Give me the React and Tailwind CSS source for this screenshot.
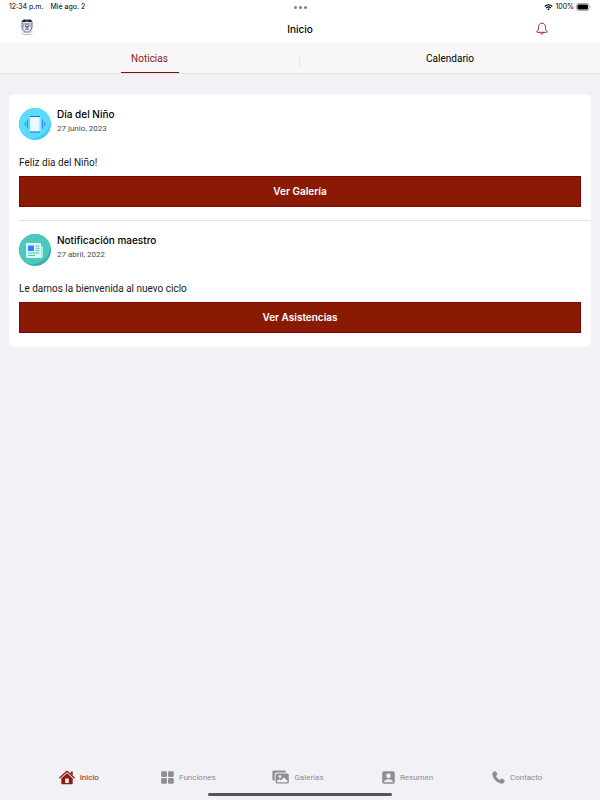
import React, { useState } from "react";

const news = [
  {
    id: 1,
    title: "Día del Niño",
    date: "27 junio, 2023",
    message: "Feliz dia del Niño!",
    action: "Ver Galería",
    Icon: GalleryBadge,
  },
  {
    id: 2,
    title: "Notificación maestro",
    date: "27 abril, 2022",
    message: "Le damos la bienvenida al nuevo ciclo",
    action: "Ver Asistencias",
    Icon: NewsBadge,
  },
];

const navItems = [
  { label: "Inicio", Icon: HomeIcon },
  { label: "Funciones", Icon: GridIcon },
  { label: "Galerías", Icon: PhotosIcon },
  { label: "Resumen", Icon: PersonIcon },
  { label: "Contacto", Icon: PhoneIcon },
];

function SchoolLogo() {
  return (
    <svg viewBox="0 0 14 18" className="w-[14px] h-[18px]" role="img" aria-label="Escudo del colegio">
      <path d="M2 3.5 L7 1.8 L12 3.5 V9 C12 12 9.5 13.6 7 14.5 C4.500 13.600 2 12 2 9 Z" fill="#e4e7ee" stroke="#5a6580" strokeWidth="1" />
      <path d="M1.500 3.200 L4 1.300 L7 2.300 L10 1.300 L12.500 3.200 L10 4.300 L7 3.600 L4 4.300 Z" fill="#1d263b" />
      <path d="M4.500 6 H9.500 M5 7.500 L7 9.500 L9.300 7.500 M5.200 11 H8.800" fill="none" stroke="#4a5673" strokeWidth="1.100" />
      <path d="M3.500 5.500 V9.500 M10.800 5.500 V9.500" stroke="#8791a5" strokeWidth="0.700" />
      <path d="M1 12.300 C3 15.500 11 15.500 13 12.300 M1.500 15.500 C4 17 10 17 12.500 15.500" fill="none" stroke="#b4bac7" strokeWidth="0.900" />
    </svg>
  );
}

function WifiIcon() {
  return (
    <svg viewBox="0 0 9 7" className="w-[9px] h-[7px]" fill="none" stroke="#000" strokeWidth="1.200" aria-hidden="true">
      <path d="M0.700 2.400 C2.900 0.300 6.100 0.300 8.300 2.400" />
      <path d="M2.100 4 C3.500 2.700 5.500 2.700 6.900 4" />
      <path d="M3.300 5 C4 4.400 5 4.400 5.700 5 L4.500 6.400 Z" fill="#000" stroke="none" />
    </svg>
  );
}

function BatteryIcon() {
  return (
    <svg viewBox="0 0 15 8" className="w-[15px] h-[8px]" aria-hidden="true">
      <rect x="0.500" y="0.500" width="12.500" height="7" rx="2" fill="#fff" stroke="#aaa" />
      <rect x="1.500" y="1.500" width="10.500" height="5" rx="1" fill="#000" />
      <path d="M13.800 2.800 C14.700 3 14.700 5 13.800 5.200 Z" fill="#aaa" />
    </svg>
  );
}

function BellIcon() {
  return (
    <svg viewBox="0 0 12 13" className="w-3 h-[13px]" fill="none" stroke="#8b1a14" strokeWidth="0.900" strokeLinejoin="round" aria-hidden="true">
      <path d="M6 1.200 C3.700 1.200 2.600 2.900 2.600 4.900 C2.600 7.900 1.700 8.700 0.900 9.500 C0.600 9.900 0.700 10.300 1.200 10.300 H10.800 C11.300 10.300 11.400 9.900 11.100 9.500 C10.300 8.700 9.400 7.900 9.400 4.900 C9.400 2.900 8.300 1.200 6 1.200 Z" />
      <path d="M4.500 10.400 C4.600 12.600 7.400 12.600 7.500 10.400" />
    </svg>
  );
}

function GalleryBadge() {
  return (
    <svg viewBox="0 0 32 32" className="size-8 shrink-0" aria-hidden="true">
      <circle cx="16" cy="16" r="16" fill="#45c9fa" />
      <path d="M16 0 C24 0 31 6 31 13.500 C31 22 23 29.500 13.500 30.500 C6 30 0 24 0 16 C0 7 7 0 16 0 Z" fill="#5adcfb" />
      <rect x="11" y="9" width="10" height="14.500" fill="#e6fbff" />
      <rect x="20" y="9" width="1.500" height="14.500" fill="#b2eefb" />
      <path d="M11 8.500 H21 M11 24 H21" stroke="#2668ee" strokeWidth="1.200" />
      <path d="M8.500 11.500 V20.500 M23.500 11.500 V20.500" stroke="#3c86f5" strokeWidth="1.100" />
      <path d="M6.300 14 V18 M25.700 14 V18" stroke="#3c86f5" strokeWidth="1.100" />
    </svg>
  );
}

function NewsBadge() {
  return (
    <svg viewBox="0 0 32 32" className="size-8 shrink-0" aria-hidden="true">
      <circle cx="16" cy="16" r="16" fill="#3aaea4" />
      <path d="M16 0 C24 0 31 6 31 13.500 C31 22 23 29.500 13.500 30.500 C6 30 0 24 0 16 C0 7 7 0 16 0 Z" fill="#4bc9bd" />
      <path d="M20 12 H24 V22 C24 23.500 23 24 22 24 H19 Z" fill="#a5eee7" />
      <path d="M7 9 H22 V22 C22 23 22 23.500 23 24 H9 C8 24 7 23 7 22 Z" fill="#d9fbf7" />
      <rect x="9" y="11.500" width="6" height="5.500" fill="#377dff" />
      <path d="M16.500 12 H20.500 M16.500 14.300 H20.500 M16.500 16.600 H20.500 M9 19 H20.500 M9 21.500 H16" stroke="#45bbb0" strokeWidth="0.900" />
    </svg>
  );
}

function HomeIcon() {
  return (
    <svg viewBox="0 0 16 15" className="w-4 h-[15px]" fill="currentColor" aria-hidden="true">
      <path d="M0.900 7.800 L8 1.300 L15.100 7.800" fill="none" stroke="currentColor" strokeWidth="1.300" strokeLinecap="round" strokeLinejoin="round" />
      <path d="M11.700 1.500 H13.700 V5.500 L11.700 3.700 Z" />
      <path fillRule="evenodd" d="M8 3.300 L13.700 8.500 V13 C13.700 13.800 13.300 14.300 12.500 14.300 H3.500 C2.700 14.300 2.300 13.800 2.300 13 V8.500 Z M6.200 8.600 V13 H9.800 V8.600 Z" />
    </svg>
  );
}

function GridIcon() {
  return (
    <svg viewBox="0 0 13 13" className="size-[13px]" fill="currentColor" aria-hidden="true">
      <rect x="0.200" y="0.200" width="5.800" height="5.800" rx="1.200" />
      <rect x="7" y="0.200" width="5.800" height="5.800" rx="1.200" />
      <rect x="0.200" y="7" width="5.800" height="5.800" rx="1.200" />
      <rect x="7" y="7" width="5.800" height="5.800" rx="1.200" />
    </svg>
  );
}

function PhotosIcon() {
  return (
    <svg viewBox="0 0 17 14" className="w-[17px] h-[14px]" fill="currentColor" aria-hidden="true">
      <path d="M2 0.500 H12.300 C13.300 0.500 13.800 1 13.800 2 V2.500 H4.500 C3.400 2.500 2.700 3.200 2.700 4.300 V10.500 H2 C1 10.500 0.400 10 0.400 9 V2 C0.400 1 1 0.500 2 0.500 Z" />
      <rect x="3.600" y="3.400" width="13.200" height="10.200" rx="1.500" />
      <circle cx="8" cy="6.600" r="1.400" fill="#f2f1f6" />
      <path d="M5 12.300 V10.900 L7.200 9.100 L8.800 10.500 L12 7.500 L15.500 10.700 V12.300 Z" fill="#f2f1f6" />
    </svg>
  );
}

function PersonIcon() {
  return (
    <svg viewBox="0 0 13 13" className="size-[13px]" aria-hidden="true">
      <rect x="0.200" y="0.200" width="12.600" height="12.600" rx="1.800" fill="currentColor" />
      <ellipse cx="6.500" cy="4.700" rx="2.200" ry="2.500" fill="#f2f1f6" />
      <path d="M2.200 11.200 C2.200 9.200 4.300 8.300 6.500 8.300 C8.700 8.300 10.800 9.200 10.800 11.200 Z" fill="#f2f1f6" />
    </svg>
  );
}

function PhoneIcon() {
  return (
    <svg viewBox="0 0 13 13" className="size-[13px]" fill="currentColor" aria-hidden="true">
      <path d="M2.700 0.300 C3.200 0 3.600 0.200 4 0.700 L5.200 2.500 C5.600 3.100 5.500 3.600 5 4.100 L4.300 4.800 C4.100 5 4.100 5.200 4.200 5.500 C4.900 6.800 6.200 8.100 7.500 8.800 C7.800 8.900 8 8.900 8.200 8.700 L8.900 8 C9.400 7.500 9.900 7.400 10.500 7.800 L12.300 9 C12.800 9.400 13 9.800 12.700 10.300 C12 11.900 10.900 12.900 9.500 12.700 C5.200 12.100 0.900 7.800 0.300 3.500 C0.100 2.100 1.100 1 2.700 0.300 Z" />
    </svg>
  );
}

export default function App() {
  const [tab, setTab] = useState("Noticias");
  const [page, setPage] = useState("Inicio");

  return (
    <div className="min-h-screen flex flex-col bg-[#f2f1f6] text-black font-['Roboto','Liberation_Sans',sans-serif]">
      {/* Status bar */}
      <div className="grid grid-cols-3 items-center h-[14px] bg-white px-[9px] text-[7px] leading-[14px] font-['Inter','Liberation_Sans',sans-serif]">
        <div className="flex gap-[7px]">
          <span>12:34 p.m.</span>
          <span>Mié ago. 2</span>
        </div>
        <div className="flex justify-center gap-[2px]">
          <span className="size-[3px] rounded-full bg-[#808080]" />
          <span className="size-[3px] rounded-full bg-[#808080]" />
          <span className="size-[3px] rounded-full bg-[#808080]" />
        </div>
        <div className="flex items-center justify-end gap-[2px]">
          <WifiIcon />
          <span>100%</span>
          <BatteryIcon />
        </div>
      </div>

      {/* Header */}
      <header className="grid grid-cols-3 items-center h-[29px] bg-white pl-5 pr-[52px]">
        <div className="pb-1"><SchoolLogo /></div>
        <h1 className="pl-8 text-center text-[10px] leading-[14px] font-medium font-['Inter','Liberation_Sans',sans-serif]">Inicio</h1>
        <button type="button" aria-label="Notificaciones" className="justify-self-end">
          <BellIcon />
        </button>
      </header>

      {/* Tabs */}
      <div className="flex items-stretch h-[31px] bg-[#f7f7f7] border-b border-[#e1e0e4]">
        {["Noticias", "Calendario"].map((name) => (
          <button key={name} type="button" onClick={() => setTab(name)} className="group flex-1 flex items-center">
            <span className="flex-1 flex justify-center">
              <span className={`flex items-center justify-center min-w-[58px] h-[30px] pt-[2px] border-b text-[10px] leading-[14px] ${tab === name ? "border-[#8b0f0c] text-[#8b2019]" : "border-transparent"}`}>
                {name}
              </span>
            </span>
            <span className="w-px h-3 mt-2 bg-[#e9e9ea] group-last:hidden" />
          </button>
        ))}
      </div>

      {/* News */}
      <main className="flex-1 px-[9px] pt-5">
        <div className="bg-white rounded-md px-[10px]">
          {news.map(({ id, title, date, message, action, Icon }) => (
            <article key={id} className="pt-[14px] pb-[13px] border-b border-[#e3e3e5] -mr-[10px] pr-[10px] last:border-b-0 last:pt-[13px] last:pb-[14px]">
              <div className="flex gap-[6px]">
                <Icon />
                <div>
                  <h2 className="text-[10px] leading-3 font-medium font-['Inter','Liberation_Sans',sans-serif]">{title}</h2>
                  <p className="pt-[3px] text-[8px] leading-3 text-[#4a4a4a]">{date}</p>
                </div>
              </div>
              <p className="mt-4 mb-[6px] text-[10px] leading-[14px] text-[#1a1a1a]">{message}</p>
              <button type="button" className="block w-full h-[31px] pb-[2px] bg-[#8b1a04] border border-[#830006] text-white text-[10px] leading-[14px] font-semibold font-['Inter','Liberation_Sans',sans-serif]">
                {action}
              </button>
            </article>
          ))}
        </div>
      </main>

      {/* Bottom navigation */}
      <nav className="flex pl-[24px] pr-[28px] pb-[7px]">
        {navItems.map(({ label, Icon }) => (
          <button
            key={label}
            type="button"
            onClick={() => setPage(label)}
            className={`flex-1 flex items-center justify-center gap-[5px] h-[18px] text-[8px] leading-3 ${page === label ? "text-[#8b1a14]" : "text-[#8e8e93]"}`}
          >
            <Icon />
            <span className="pt-[2px]">{label}</span>
          </button>
        ))}
      </nav>
      <div className="flex justify-center pb-1">
        <div className="w-[184px] h-[3px] rounded-full bg-[#555]" />
      </div>
    </div>
  );
}
